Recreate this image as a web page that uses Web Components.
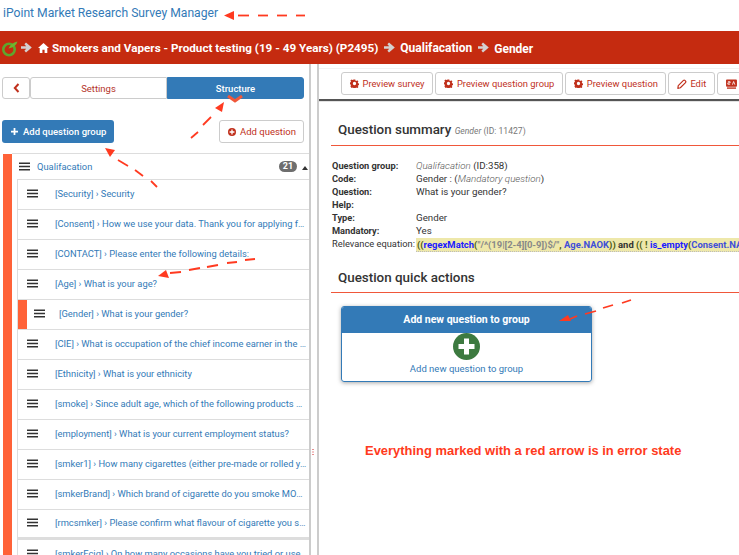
<!DOCTYPE html>
<html><head><meta charset="utf-8">
<style>
html,body{margin:0;padding:0;width:739px;height:555px;overflow:hidden;background:#fff;font-family:Roboto,"Liberation Sans",sans-serif;}
survey-app{display:block;width:739px;height:555px;position:relative;overflow:hidden}
</style></head><body>
<survey-app></survey-app>
<script>
const ARROW='<path d="M0 4.200h5.200L3.400 2.200 5 .6 10.800 5.500 5 10.400 3.400 8.800l1.800-2H0z" fill="#d4d0d0"/>';
const ICONS={
gear:'<svg width="9" height="9" viewBox="0 0 24 24"><path fill="currentColor" fill-rule="evenodd" d="M9.500 0h5l.7 3.400 2.300 1 2.900-1.900 3.500 3.500-1.900 2.900 1 2.300 3.400.7v5l-3.400.7-1 2.300 1.900 2.900-3.500 3.500-2.900-1.900-2.300 1-.7 3.400h-5l-.7-3.400-2.300-1-2.900 1.900L-.5 20l1.900-2.900-1-2.300L-3 14.100v-5l3.400-.7 1-2.300L-.5 3.200 3 -.3l2.900 1.900 2.300-1zM12 7a5 5 0 1 0 0 10 5 5 0 0 0 0-10z" transform="translate(1.400 1.400) scale(.88)"/></svg>',
pencil:'<svg width="10" height="10" viewBox="0 0 24 24"><path fill="none" stroke="currentColor" stroke-width="2.800" stroke-linejoin="round" d="M3 16 15.500 3.500a2.500 2.500 0 0 1 3.500 0l1.500 1.500a2.500 2.500 0 0 1 0 3.500L8 21l-6 1.500z"/></svg>',
lang:'<svg width="11" height="10" viewBox="0 0 24 22"><rect x="0" y="1" width="24" height="16" rx="2" fill="currentColor"/><path d="M2 20h20" stroke="currentColor" stroke-width="3"/><path d="M4 6h5v2.500H4v3h5M14 12.500l2.700-7 2.700 7" fill="none" stroke="#fff" stroke-width="1.800"/></svg>',
bars:'<svg width="11" height="9" viewBox="0 0 11 9" style="display:block"><path d="M0 .5h11v1.600H0zM0 3.700h11v1.600H0zM0 6.900h11v1.600H0z" fill="#333"/></svg>'
};

class AppHeader extends HTMLElement{constructor(){super();this.attachShadow({mode:'open'}).innerHTML=`<style>
:host{display:block;height:31px;box-sizing:border-box;padding:6px 0 0 3px;font-size:12.15px;line-height:15px;color:#337ab7;white-space:nowrap}
</style><slot></slot>`}}
customElements.define('app-header',AppHeader);

class CrumbBar extends HTMLElement{constructor(){super();this.attachShadow({mode:'open'}).innerHTML=`<style>
:host{display:flex;align-items:center;height:33px;background:#c52b10;color:#fff;font-size:12px;font-weight:700;white-space:nowrap;overflow:hidden;padding-left:2px;box-sizing:border-box}
svg{flex:none}
.t{margin-left:3px;font-size:11.7px}
.a{margin:0 5px 0 6px}
</style>
<svg width="16" height="18" viewBox="0 0 16 18"><circle cx="7" cy="10.500" r="5.700" fill="none" stroke="#5ea62e" stroke-width="2.600"/><path d="M6.500 9.500C8 6 11 3.500 15.500 2.500 14.500 6 11.500 8.500 6.500 9.500z" fill="#6fb52f"/></svg>
<svg style="margin-left:3px" width="11" height="11" viewBox="0 0 11 11">${ARROW}</svg>
<svg style="margin-left:6px" width="11" height="10" viewBox="0 0 11 10"><path d="M5.500 0 11 5H9.300v5H6.600V6.800H4.400V10H1.700V5H0z" fill="#fff"/></svg>
<span class="t">Smokers and Vapers - Product testing (19 - 49 Years) (P2495)</span>
<svg class="a" width="11" height="11" viewBox="0 0 11 11">${ARROW}</svg>
<span>Qualifacation</span>
<svg class="a" width="11" height="11" viewBox="0 0 11 11">${ARROW}</svg>
<span style="margin-top:2px">Gender</span>`}}
customElements.define('crumb-bar',CrumbBar);

class QRow extends HTMLElement{constructor(){super();this.attachShadow({mode:'open'}).innerHTML=`<style>
:host{display:flex;align-items:center;height:30px;box-sizing:border-box;border-bottom:1px solid #ddd;padding:0 2px 3px 9px;font-size:9.35px;color:#337ab7;white-space:nowrap;overflow:hidden;background:#fff}
:host([active]){padding-left:0}
.mark{display:none;width:9px;align-self:stretch;margin-bottom:-3px;background:#ff6238;margin-right:7px}
:host([active]) .mark{display:block}
.h{flex:none;width:28px}
:host([active]) .h{width:25px}
.t{flex:1;min-width:0;overflow:hidden;text-overflow:ellipsis}
</style><span class="mark"></span><span class="h">${ICONS.bars}</span><span class="t"><slot></slot></span>`}}
customElements.define('q-row',QRow);

class SidePanel extends HTMLElement{constructor(){super();this.attachShadow({mode:'open'}).innerHTML=`<style>
:host{display:block;width:311px;flex:none;box-sizing:border-box;border-right:2px solid #ccc;height:100%;overflow:hidden}
.tabs{display:flex;padding:13px 5px 0 2px;height:22px}
.tab{display:flex;align-items:center;justify-content:center;box-sizing:border-box;height:22px;border:1px solid #ccc;font-size:9.5px;color:#b5342a;width:137px}
.back{width:28px;border-radius:3px}
.set{border-radius:3px 0 0 3px}
.str{background:#337ab7;border-color:#337ab7;color:#fff;font-weight:500;border-radius:0 3px 3px 0}
.acts{display:flex;justify-content:space-between;padding:21px 5px 0 2px}
.btn{display:flex;align-items:center;box-sizing:border-box;height:23px;font-size:9.5px;border-radius:3px;white-space:nowrap}
.pri{width:112px;background:#337ab7;color:#fff;font-weight:500;padding-left:9px;gap:5px}
.def{width:85px;border:1px solid #ccc;color:#c0301c;padding-left:8px;gap:4px}
.tree{display:flex;margin:10px 0 0 3px;}
.bar{width:9px;background:#ff6238;flex:none;height:420px;margin-top:1px}
.col{flex:1;min-width:0;border-top:1px solid #ddd}
.gh{display:flex;align-items:center;height:25px;padding-left:7px;font-size:9.35px;color:#337ab7;position:relative}
.gh .n{margin-left:7px}
.badge{position:absolute;right:12px;top:7px;width:18px;height:11px;border-radius:6px;background:#6e6e6e;color:#fff;font-size:9px;font-weight:700;text-align:center;line-height:11px}
.car{position:absolute;right:1px;top:12px;width:0;height:0;border:3.500px solid transparent;border-top:0;border-bottom:4px solid #333}
.rows{margin-left:5px;border-left:1px solid #ddd;border-top:1px solid #ddd}
::slotted(q-row:nth-last-child(2)){border-bottom:3px solid #ddd}
</style>
<div class="tabs">
<div class="tab back"><svg width="7" height="10" viewBox="0 0 7 10"><path d="M5.500 1 1.800 5l3.700 4" fill="none" stroke="#c0301c" stroke-width="2"/></svg></div>
<div class="tab set">Settings</div><div class="tab str">Structure</div></div>
<div class="acts"><div class="btn pri"><svg width="7" height="7" viewBox="0 0 8 8"><path d="M3 0h2v3h3v2H5v3H3V5H0V3h3z" fill="#fff"/></svg>Add question group</div>
<div class="btn def"><svg width="8" height="8" viewBox="0 0 10 10"><circle cx="5" cy="5" r="5" fill="#c0301c"/><path d="M4.200 2h1.600v2.200H8v1.600H5.800V8H4.200V5.800H2V4.200h2.200z" fill="#fff"/></svg>Add question</div></div>
<div class="tree"><div class="bar"></div><div class="col">
<div class="gh">${ICONS.bars}<span class="n">Qualifacation</span><span class="badge">21</span><span class="car"></span></div>
<div class="rows"><slot></slot></div></div></div>`}}
customElements.define('side-panel',SidePanel);

class ToolBtn extends HTMLElement{constructor(){super();const i=this.getAttribute('icon')||'gear';this.attachShadow({mode:'open'}).innerHTML=`<style>
:host{display:flex;flex:none;align-items:center;gap:3.500px;box-sizing:border-box;height:23px;padding:0 8px;border:1px solid #ccc;border-radius:3px;font-size:9.35px;color:#c0301c;white-space:nowrap;background:#fff}
svg{display:block;flex:none}
</style>${ICONS[i]}<slot></slot>`}}
customElements.define('tool-btn',ToolBtn);

class ToolBar extends HTMLElement{constructor(){super();this.attachShadow({mode:'open'}).innerHTML=`<style>
:host{display:flex;gap:2px;height:31px;margin-top:4px;box-sizing:border-box;padding:3px 0 0 22px;border-top:1px solid #f2f2f2;box-shadow:0 2px 1px #555;overflow:hidden;background:#fff;white-space:nowrap}
</style><slot></slot>`}}
customElements.define('tool-bar',ToolBar);

class SecHead extends HTMLElement{constructor(){super();this.attachShadow({mode:'open'}).innerHTML=`<style>
:host{display:block;box-sizing:border-box;margin-left:12px;padding-left:7px;border-bottom:1px solid #f0573a;font-size:13.4px;font-weight:500;color:#333;line-height:18px;height:25px;white-space:nowrap}
::slotted(small){font-size:8.6px;color:#777;font-weight:400}
</style><slot></slot>`}}
customElements.define('sec-head',SecHead);

class InfoRow extends HTMLElement{constructor(){super();this.attachShadow({mode:'open'}).innerHTML=`<style>
:host{display:flex;height:13px;line-height:13px;font-size:9.75px;color:#333;white-space:nowrap}
.l{width:84px;flex:none;font-weight:700;font-size:9.25px}
:host([plain]) .l{font-weight:400;font-size:9.3px}
</style><span class="l">${this.getAttribute('label')}</span><span><slot></slot></span>`}}
customElements.define('info-row',InfoRow);

class ActionCard extends HTMLElement{constructor(){super();this.attachShadow({mode:'open'}).innerHTML=`<style>
:host{display:block;width:251px;height:76px;box-sizing:border-box;margin:13px 0 0 22px;border:1px solid #337ab7;border-radius:3px;box-shadow:0 1px 4px rgba(0,0,0,.35);text-align:center;overflow:hidden}
.h{height:26px;background:#337ab7;color:#fff;font-size:10.5px;font-weight:700;line-height:26px}
svg{display:block;margin:0 auto}
.c{font-size:9.5px;color:#337ab7;margin-top:2px;line-height:14px}
</style><div class="h"><slot></slot></div>
<svg width="27" height="27" viewBox="0 0 27 27"><circle cx="13.500" cy="13.500" r="13.500" fill="#3d7a40"/><path d="M11 5.500h5V11h5.500v5H16v5.500h-5V16H5.500v-5H11z" fill="#fff"/></svg>
<div class="c"><slot name="cap"></slot></div>`}}
customElements.define('action-card',ActionCard);

class MainPanel extends HTMLElement{constructor(){super();this.attachShadow({mode:'open'}).innerHTML=`<style>
:host{display:block;flex:1;min-width:0;height:100%;overflow:hidden;border-left:2px solid #ccc;margin-left:6px;box-sizing:border-box}
</style><slot></slot>`}}
customElements.define('main-panel',MainPanel);

class RedArrows extends HTMLElement{constructor(){super();
const lines=[[238,15.5,249,15.5],[258,15.5,268,15.5],[277,15.5,287,15.5],[296,15.5,305,15.5],
[191,138,198,132],[203,125,211,117],
[118,160,128,166],[135,170,143,176],[151,181,157,187],
[170,273,181,272],[189,270,200,268],[207,267,218,265],[227,263,237,262],[245,260,255,259],
[570,319,577,316],[585,314,596,311],[603,308,613,305],[622,303,631,300]];
const heads=['224,15.500 234,11 234,20','224,102 215,108 222,112','105,148 115,150 110,157','158,276 166,270 169,278','559,321 568,315 571,321'];
this.attachShadow({mode:'open'}).innerHTML=`<style>
:host{display:block;position:absolute;left:0;top:0;width:739px;height:555px;pointer-events:none}
svg{display:block}
</style><svg width="739" height="555" viewBox="0 0 739 555">
${lines.map(l=>`<line x1="${l[0]}" y1="${l[1]}" x2="${l[2]}" y2="${l[3]}" stroke="#ff3a20" stroke-width="1.800"/>`).join('')}
${heads.map(h=>`<polygon points="${h}" fill="#ff3a20"/>`).join('')}
<path d="M228 96l7 5 7-5" fill="none" stroke="#f0573a" stroke-width="3"/>
<path d="M313 449v1M313 451.500v1M313 454v1" stroke="#d02020" stroke-width="1"/>
</svg>`}}
customElements.define('red-arrows',RedArrows);

class SurveyApp extends HTMLElement{constructor(){super();this.attachShadow({mode:'open'}).innerHTML=`<style>
:host{display:block}
.body{display:flex;height:491px}
.tbl{margin:13px 0 0 13px}
.q{color:#1a1aff}
.v{color:#3f4fd8}
.eq{display:block;box-sizing:border-box;background:#eee8aa;border-bottom:1px dotted #bbb;padding-left:1px;width:323px;height:14px;line-height:14px;overflow:hidden;font-weight:700;font-size:9.45px;color:#4a5a10;margin-top:1px}
.d{color:#333}
.s{color:#888}
.note{margin:61px 0 0 46px;font:700 12.950px "Liberation Sans",sans-serif;color:#ff3a20;white-space:nowrap}
em{font-style:italic;font-weight:300;color:#555}
</style>
<app-header>iPoint Market Research Survey Manager</app-header>
<crumb-bar></crumb-bar>
<div class="body">
<side-panel>
<q-row>[Security] › Security</q-row>
<q-row>[Consent] › How we use your data. Thank you for applying for our research programme</q-row>
<q-row>[CONTACT] › Please enter the following details:</q-row>
<q-row>[Age] › What is your age?</q-row>
<q-row active>[Gender] › What is your gender?</q-row>
<q-row>[CIE] › What is occupation of the chief income earner in the household?</q-row>
<q-row>[Ethnicity] › What is your ethnicity</q-row>
<q-row>[smoke] › Since adult age, which of the following products have you used?</q-row>
<q-row>[employment] › What is your current employment status?</q-row>
<q-row>[smker1] › How many cigarettes (either pre-made or rolled yourself) do you smoke?</q-row>
<q-row>[smkerBrand] › Which brand of cigarette do you smoke MOST often?</q-row>
<q-row>[rmcsmker] › Please confirm what flavour of cigarette you smoke most often</q-row>
<q-row>[smkerEcig] › On how many occasions have you tried or used an e-cigarette?</q-row>
</side-panel>
<main-panel>
<tool-bar>
<tool-btn>Preview survey</tool-btn><tool-btn>Preview question group</tool-btn><tool-btn style="padding-right:7px">Preview question</tool-btn>
<tool-btn icon="pencil">Edit</tool-btn><tool-btn icon="lang">Check logic</tool-btn>
</tool-bar>
<sec-head style="margin-top:22px">Question summary <small><i>Gender</i> (ID: 11427)</small></sec-head>
<div class="tbl">
<info-row label="Question group:"><em>Qualifacation</em> (ID:358)</info-row>
<info-row label="Code:">Gender : (<em>Mandatory question</em>)</info-row>
<info-row label="Question:">What is your gender?</info-row>
<info-row label="Help:"></info-row>
<info-row label="Type:">Gender</info-row>
<info-row label="Mandatory:">Yes</info-row>
<info-row plain label="Relevance equation:"><span class="eq">((<span class="q">regexMatch</span>(<span class="s">"/^(19|[2-4][0-9])$/"</span>, <span class="v">Age.NAOK</span>)) <span class="d">and</span> (( ! <span class="q">is_empty</span>(<span class="v">Consent.NAOK</span>)))</span></info-row>
</div>
<sec-head style="margin-top:19px;height:24px">Question quick actions</sec-head>
<action-card>Add new question to group<span slot="cap">Add new question to group</span></action-card>
<div class="note">Everything marked with a red arrow is in error state</div>
</main-panel>
</div>
<red-arrows></red-arrows>`}}
customElements.define('survey-app',SurveyApp);
</script>
</body></html>
